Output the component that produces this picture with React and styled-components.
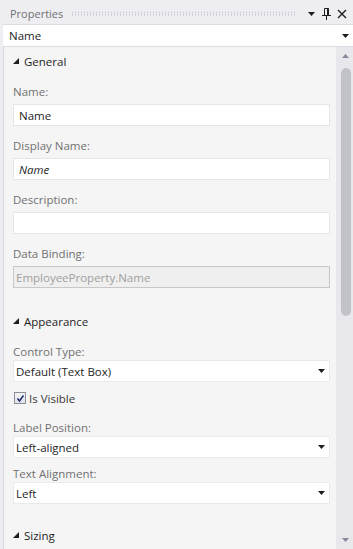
import React from 'react';
import styled, { createGlobalStyle } from 'styled-components';

const GlobalStyle = createGlobalStyle`
  html, body {
    margin: 0;
    padding: 0;
    background: #eeeef2;
  }
  * {
    box-sizing: border-box;
  }
`;

const font = `"Open Sans", "Noto Sans", "Liberation Sans", sans-serif`;

// Small icons used in the tool window chrome
const DownArrow = ({ color = '#1e1e1e' }) => (
  <svg width="7" height="4" viewBox="0 0 7 4">
    <polygon points="0,0 7,0 3.5,4" fill={color} />
  </svg>
);

const UpArrow = ({ color = '#868999' }) => (
  <svg width="7" height="4" viewBox="0 0 7 4">
    <polygon points="0,4 7,4 3.5,0" fill={color} />
  </svg>
);

const PinIcon = () => (
  <svg width="9" height="12" viewBox="0 0 9 12">
    <path d="M2.5 0.5 H6.5 V7 M2.5 0.5 V7" stroke="#1e1e1e" strokeWidth="1" fill="none" />
    <rect x="5" y="0.5" width="1.5" height="6.5" fill="#1e1e1e" />
    <line x1="0" y1="7.5" x2="9" y2="7.5" stroke="#1e1e1e" strokeWidth="1" />
    <line x1="4.5" y1="7.5" x2="4.5" y2="12" stroke="#1e1e1e" strokeWidth="1" />
  </svg>
);

const CloseIcon = () => (
  <svg width="10" height="10" viewBox="0 0 10 10">
    <path d="M1 1 L9 9 M9 1 L1 9" stroke="#1e1e1e" strokeWidth="1.4" />
  </svg>
);

const ExpandedGlyph = () => (
  <svg width="6" height="6" viewBox="0 0 6 6">
    <polygon points="6,0 6,6 0,6" fill="#1e1e1e" />
  </svg>
);

const CheckMark = () => (
  <svg width="9" height="9" viewBox="0 0 9 9">
    <path d="M1.5 4.5 L3.5 7 L7.5 1.5" stroke="#1c2b6b" strokeWidth="1.5" fill="none" />
  </svg>
);

function App() {
  return (
    <>
      <GlobalStyle />
      <Window>
        <TitleBar>
          <Title>Properties</Title>
          <Grip />
          <TitleButtons>
            <IconButton><DownArrow /></IconButton>
            <IconButton><PinIcon /></IconButton>
            <IconButton><CloseIcon /></IconButton>
          </TitleButtons>
        </TitleBar>

        <ObjectPicker>
          <span>Name</span>
          <DownArrow />
        </ObjectPicker>

        <Body>
          <Content>
            <SectionHeader>
              <ExpandedGlyph />
              <span>General</span>
            </SectionHeader>

            <Field $gap={13}>
              <Label>Name:</Label>
              <TextBox>Name</TextBox>
            </Field>
            <Field $gap={12}>
              <Label>Display Name:</Label>
              <TextBox $italic>Name</TextBox>
            </Field>
            <Field $gap={12}>
              <Label>Description:</Label>
              <TextBox />
            </Field>
            <Field $gap={12}>
              <Label>Data Binding:</Label>
              <TextBox $disabled>EmployeeProperty.Name</TextBox>
            </Field>

            <SectionHeader $gap={23}>
              <ExpandedGlyph />
              <span>Appearance</span>
            </SectionHeader>

            <Field $gap={13}>
              <Label $tight>Control Type:</Label>
              <Select>
                <span>Default (Text Box)</span>
                <DownArrow />
              </Select>
            </Field>

            <CheckRow>
              <CheckBox><CheckMark /></CheckBox>
              <span>Is Visible</span>
            </CheckRow>

            <Field $gap={14}>
              <Label $tight>Label Position:</Label>
              <Select>
                <span>Left-aligned</span>
                <DownArrow />
              </Select>
            </Field>
            <Field $gap={8}>
              <Label $tight>Text Alignment:</Label>
              <Select>
                <span>Left</span>
                <DownArrow />
              </Select>
            </Field>

            <SectionHeader $gap={21}>
              <ExpandedGlyph />
              <span>Sizing</span>
            </SectionHeader>
          </Content>

          <ScrollBar>
            <ScrollButton><UpArrow /></ScrollButton>
            <Track>
              <Thumb />
            </Track>
            <ScrollButton><DownArrow color="#868999" /></ScrollButton>
          </ScrollBar>
        </Body>
      </Window>
    </>
  );
}

const Window = styled.div`
  width: 353px;
  height: 549px;
  padding: 3px 0 0 3px;
  background: #eeeef2;
  display: flex;
  flex-direction: column;
  font-family: ${font};
  font-size: 11.5px;
  color: #1e1e1e;
  overflow: hidden;
`;

const TitleBar = styled.div`
  height: 21px;
  display: flex;
  align-items: center;
  padding-left: 7px;
  gap: 8px;
`;

const Title = styled.div`
  color: #717171;
  font-size: 11px;
`;

const Grip = styled.div`
  flex: 1;
  height: 5px;
  background-image: radial-gradient(circle, #c0c0c8 0.7px, transparent 0.9px);
  background-size: 3px 2.5px;
`;

const TitleButtons = styled.div`
  display: flex;
  align-items: center;
  padding-right: 4px;
`;

const IconButton = styled.div`
  width: 15px;
  height: 15px;
  display: flex;
  align-items: center;
  justify-content: center;
`;

const ObjectPicker = styled.div`
  height: 23px;
  background: #ffffff;
  border-top: 1px solid #dcdce2;
  border-bottom: 1px solid #dcdce2;
  display: flex;
  align-items: center;
  justify-content: space-between;
  padding: 0 4px 0 6px;
`;

const Body = styled.div`
  flex: 1;
  display: flex;
  min-height: 0;
  border-left: 1px solid #d6d7de;
`;

const Content = styled.div`
  flex: 1;
  background: #f5f5f5;
  padding: 4px 6px 0 9px;
  overflow: hidden;
`;

const SectionHeader = styled.div`
  height: 20px;
  display: flex;
  align-items: center;
  gap: 5px;
  margin-top: ${p => p.$gap || 0}px;
  font-size: 11.5px;
  color: #1e1e1e;
`;

const Field = styled.div`
  display: flex;
  flex-direction: column;
  margin-top: ${p => p.$gap}px;
`;

const Label = styled.div`
  height: 16px;
  line-height: 16px;
  color: #717171;
  margin-bottom: ${p => (p.$tight ? 0 : 4)}px;
`;

const TextBox = styled.div`
  height: 22px;
  display: flex;
  align-items: center;
  padding: 0 ${p => (p.$disabled ? 2 : 5)}px;
  background: ${p => (p.$disabled ? '#efefef' : '#ffffff')};
  border: 1px solid ${p => (p.$disabled ? '#c8c8c8' : '#e6e6e8')};
  color: ${p => (p.$disabled ? '#a0a0a0' : '#1e1e1e')};
  font-style: ${p => (p.$italic ? 'italic' : 'normal')};
`;

const Select = styled.div`
  height: 22px;
  display: flex;
  align-items: center;
  justify-content: space-between;
  padding: 0 4px 0 2px;
  background: #ffffff;
  border: 1px solid #eaeaec;
`;

const CheckRow = styled.div`
  height: 16px;
  margin-top: 8px;
  display: flex;
  align-items: center;
  gap: 3px;
  color: #3a3a3a;
`;

const CheckBox = styled.div`
  width: 12px;
  height: 12px;
  border: 1px solid #8e8f99;
  background: linear-gradient(#f4f4f6, #e2e3ea);
  display: flex;
  align-items: center;
  justify-content: center;
  margin-left: 1px;
`;

const ScrollBar = styled.div`
  width: 17px;
  background: #e8e8ec;
  display: flex;
  flex-direction: column;
`;

const ScrollButton = styled.div`
  height: 18px;
  display: flex;
  align-items: center;
  justify-content: center;
  padding-left: 2px;
`;

const Track = styled.div`
  flex: 1;
  padding: 3px 2px 0 5px;
`;

const Thumb = styled.div`
  height: 248px;
  border-radius: 5px;
  background: #c2c3c9;
`;

export default App;
